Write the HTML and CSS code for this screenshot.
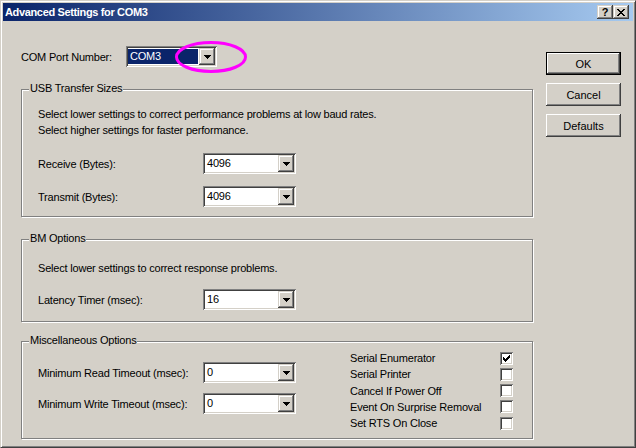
FILE: index.html
```html
<!DOCTYPE html>
<html>
<head>
<meta charset="utf-8">
<title>Advanced Settings for COM3</title>
<link rel="stylesheet" href="styles.css">
</head>
<body>
<div class="window">
  <div class="titlebar">
    <span class="title">Advanced Settings for COM3</span>
    <div class="tbtns">
      <span class="tbtn help">?</span>
      <span class="tbtn close"><svg width="8" height="7" viewBox="0 0 8 7" shape-rendering="crispEdges"><path d="M0 0h2v1h-2z M6 0h2v1h-2z M1 1h2v1h-2z M5 1h2v1h-2z M2 2h4v1h-4z M3 3h2v1h-2z M2 4h4v1h-4z M1 5h2v1h-2z M5 5h2v1h-2z M0 6h2v1h-2z M6 6h2v1h-2z" fill="#000"/></svg></span>
    </div>
  </div>
  <div class="body">
    <div class="main">
      <div class="com-row">
        <span class="com-lbl">COM Port Number:</span>
        <div class="combo com"><span class="val sel">COM3</span><span class="dd"><svg width="7" height="4" viewBox="0 0 7 4" shape-rendering="crispEdges"><path d="M0 0h7v1h-1v1h-1v1h-1v1h-1v-1h-1v-1h-1v-1h-1z" fill="#000"/></svg></span></div>
        <svg class="ring" width="74" height="34" viewBox="0 0 74 34"><ellipse cx="37" cy="17" rx="34.5" ry="14.5" fill="none" stroke="#FF00FF" stroke-width="3"/></svg>
      </div>

      <div class="group g1">
        <div class="gtitle">USB Transfer Sizes</div>
        <p class="line l1">Select lower settings to correct performance problems at low baud rates.</p>
        <p class="line">Select higher settings for faster performance.</p>
        <div class="field f-recv"><span class="lbl">Receive (Bytes):</span><div class="combo"><span class="val">4096</span><span class="dd"><svg width="7" height="4" viewBox="0 0 7 4" shape-rendering="crispEdges"><path d="M0 0h7v1h-1v1h-1v1h-1v1h-1v-1h-1v-1h-1v-1h-1z" fill="#000"/></svg></span></div></div>
        <div class="field f-trans"><span class="lbl">Transmit (Bytes):</span><div class="combo"><span class="val">4096</span><span class="dd"><svg width="7" height="4" viewBox="0 0 7 4" shape-rendering="crispEdges"><path d="M0 0h7v1h-1v1h-1v1h-1v1h-1v-1h-1v-1h-1v-1h-1z" fill="#000"/></svg></span></div></div>
      </div>

      <div class="group g2">
        <div class="gtitle">BM Options</div>
        <p class="line l1">Select lower settings to correct response problems.</p>
        <div class="field f-lat"><span class="lbl">Latency Timer (msec):</span><div class="combo"><span class="val">16</span><span class="dd"><svg width="7" height="4" viewBox="0 0 7 4" shape-rendering="crispEdges"><path d="M0 0h7v1h-1v1h-1v1h-1v1h-1v-1h-1v-1h-1v-1h-1z" fill="#000"/></svg></span></div></div>
      </div>

      <div class="group g3">
        <div class="gtitle">Miscellaneous Options</div>
        <div class="misc">
          <div class="misc-left">
            <div class="field f-read"><span class="lbl">Minimum Read Timeout (msec):</span><div class="combo"><span class="val">0</span><span class="dd"><svg width="7" height="4" viewBox="0 0 7 4" shape-rendering="crispEdges"><path d="M0 0h7v1h-1v1h-1v1h-1v1h-1v-1h-1v-1h-1v-1h-1z" fill="#000"/></svg></span></div></div>
            <div class="field f-write"><span class="lbl">Minimum Write Timeout (msec):</span><div class="combo"><span class="val">0</span><span class="dd"><svg width="7" height="4" viewBox="0 0 7 4" shape-rendering="crispEdges"><path d="M0 0h7v1h-1v1h-1v1h-1v1h-1v-1h-1v-1h-1v-1h-1z" fill="#000"/></svg></span></div></div>
          </div>
          <div class="misc-right">
            <div class="chk"><span class="clbl">Serial Enumerator</span><span class="cb"><svg width="7" height="7" viewBox="0 0 7 7" shape-rendering="crispEdges"><path d="M6 0h1v1h-1z M5 1h2v1h-2z M0 2h1v1h-1z M4 2h3v1h-3z M0 3h2v1h-2z M3 3h3v1h-3z M0 4h5v1h-5z M1 5h3v1h-3z M2 6h1v1h-1z" fill="#000"/></svg></span></div>
            <div class="chk"><span class="clbl">Serial Printer</span><span class="cb"></span></div>
            <div class="chk"><span class="clbl">Cancel If Power Off</span><span class="cb"></span></div>
            <div class="chk"><span class="clbl">Event On Surprise Removal</span><span class="cb"></span></div>
            <div class="chk"><span class="clbl">Set RTS On Close</span><span class="cb"></span></div>
          </div>
        </div>
      </div>
    </div>

    <div class="btncol">
      <div class="btn default">OK</div>
      <div class="btn">Cancel</div>
      <div class="btn">Defaults</div>
    </div>
  </div>
</div>
</body>
</html>
```

FILE: styles.css
```css
* { box-sizing: border-box; }
html, body { margin: 0; padding: 0; }
body {
  width: 636px;
  height: 448px;
  overflow: hidden;
  background: #D4D0C8;
  font-family: "Liberation Sans", Arial, sans-serif;
  font-size: 11px;
  letter-spacing: -0.2px;
  color: #000;
}
p { margin: 0; }

.window {
  width: 636px;
  height: 448px;
  background: #D4D0C8;
  border: 1px solid;
  border-color: #D4D0C8 #404040 #404040 #D4D0C8;
  box-shadow: inset 1px 1px #fff, inset -1px -1px #808080;
  padding: 2px;
}

.titlebar {
  height: 18px;
  background: linear-gradient(to right, #0A246A, #A6CAF0);
  display: flex;
  align-items: center;
  justify-content: space-between;
  padding: 0 4px 0 2px;
}
.title {
  color: #fff;
  font-weight: bold;
  font-size: 11px;
  letter-spacing: -0.35px;
  line-height: 18px;
}
.tbtns { display: flex; }
.tbtn {
  width: 16px;
  height: 14px;
  background: #D4D0C8;
  box-shadow: inset -1px -1px #404040, inset 1px 1px #D4D0C8, inset -2px -2px #808080, inset 2px 2px #fff;
  display: flex;
  align-items: center;
  justify-content: center;
}
.tbtn.help {
  font-weight: bold;
  font-size: 11px;
  letter-spacing: 0;
  line-height: 14px;
  padding-bottom: 1px;
}
.tbtn.close svg { display: block; }

.body {
  display: flex;
  padding: 0 12px 0 18px;
}
.main { width: 512px; }

.com-row {
  position: relative;
  display: flex;
  align-items: center;
  height: 21px;
  margin-top: 25px;
}
.com-lbl { width: 105px; }
.ring {
  position: absolute;
  left: 153px;
  top: -6px;
}

.combo {
  display: flex;
  width: 93px;
  height: 21px;
  padding: 2px;
  background: #fff;
  box-shadow: inset 1px 1px #808080, inset -1px -1px #fff, inset 2px 2px #404040, inset -2px -2px #D4D0C8;
}
.combo.com { width: 91px; }
.combo .val {
  flex: 1;
  line-height: 17px;
  padding-left: 2px;
}
.combo .val.sel {
  background: #0A246A;
  color: #fff;
  margin: 1px 1px 1px 0;
  line-height: 15px;
  padding-left: 2px;
}
.combo .dd {
  width: 16px;
  height: 17px;
  background: #D4D0C8;
  box-shadow: inset -1px -1px #404040, inset 1px 1px #D4D0C8, inset -2px -2px #808080, inset 2px 2px #fff;
  display: flex;
  align-items: center;
  justify-content: center;
}
.combo .dd svg { display: block; }

.group {
  border: 1px solid #808080;
  box-shadow: inset 1px 1px #fff, 1px 1px #fff;
  padding: 0 0 0 16px;
}
.gtitle {
  width: fit-content;
  margin: -8px 0 0 -9px;
  padding: 0 1px;
  line-height: 13px;
  height: 13px;
  background: #D4D0C8;
}
.line { line-height: 16px; }
.line.l1 { margin-top: 11px; }

.field {
  display: flex;
  align-items: center;
  height: 21px;
}
.field .lbl { width: 165px; }

.g1 { margin-top: 22px; padding-bottom: 9px; }
.g1 .f-recv { margin-top: 15px; }
.g1 .f-trans { margin-top: 12px; }

.g2 { margin-top: 22px; padding-bottom: 11px; }
.g2 .line.l1 { margin-top: 15px; }
.g2 .f-lat { margin-top: 13px; }

.g3 { margin-top: 19px; height: 98px; }
.misc { display: flex; }
.misc-left { width: 258px; margin-top: 15px; }
.misc-left .f-write { margin-top: 10px; }
.misc-right { margin-left: 54px; margin-top: 3px; }
.chk {
  display: flex;
  align-items: center;
  height: 16.25px;
}
.clbl { width: 150px; }
.cb {
  width: 13px;
  height: 13px;
  background: #fff;
  box-shadow: inset 1px 1px #808080, inset -1px -1px #fff, inset 2px 2px #404040, inset -2px -2px #D4D0C8;
  padding: 3px;
}
.cb svg { display: block; }

.btncol {
  margin-left: 13px;
  margin-top: 31px;
  display: flex;
  flex-direction: column;
  gap: 8px;
}
.btn {
  width: 75px;
  height: 23px;
  background: #D4D0C8;
  box-shadow: inset -1px -1px #404040, inset 1px 1px #fff, inset -2px -2px #808080, inset 2px 2px #D4D0C8;
  display: flex;
  align-items: center;
  justify-content: center;
  letter-spacing: 0;
}
.btn.default {
  border: 1px solid #000;
}
```
